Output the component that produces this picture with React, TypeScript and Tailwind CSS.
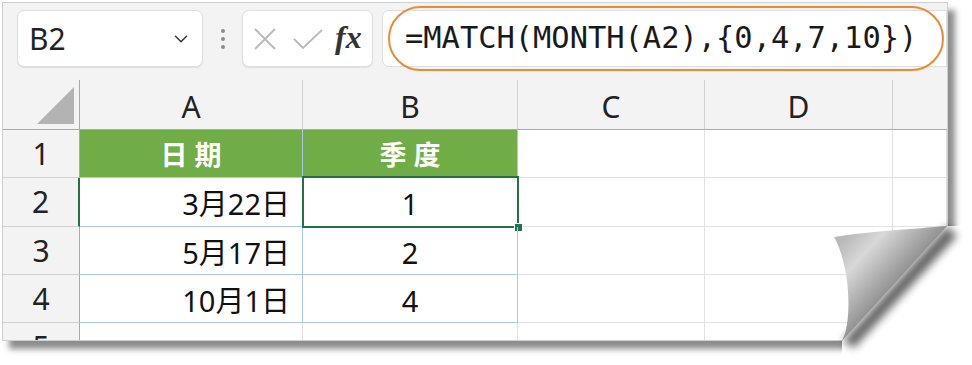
import { ChevronDown } from "lucide-react";

const cols = "grid grid-cols-[77px_223px_215px_187px_188px_1fr]";
const sans = "font-['Noto_Sans','Noto_Sans_CJK_SC',sans-serif]";

const Formula = () => (
  <div className="h-[77px] bg-[#f3f3f3] flex items-start pt-[7px] pl-[14px]">
    <div className="w-[186px] h-[57px] bg-white border border-[#dedede] rounded-[7px] shadow-[0_1px_1px_rgba(0,0,0,0.08)] flex items-center justify-between pl-[11px] pr-[10px]">
      <span className={`${sans} text-[30px] leading-none text-[#222]`}>B2</span>
      <ChevronDown className="w-[22px] h-[22px] text-[#333]" strokeWidth={1.6} />
    </div>
    <div className="w-[39px] h-[57px] flex flex-col items-center justify-center gap-[4px]">
      <span className="w-[4px] h-[4px] rounded-full bg-[#8c8c8c]" />
      <span className="w-[4px] h-[4px] rounded-full bg-[#8c8c8c]" />
      <span className="w-[4px] h-[4px] rounded-full bg-[#8c8c8c]" />
    </div>
    <div className="w-[131px] h-[57px] bg-white border border-[#dedede] rounded-[7px] shadow-[0_1px_1px_rgba(0,0,0,0.08)] flex items-center pl-[10px]">
      <svg width="24" height="24" viewBox="0 0 24 24" className="mr-[15px]">
        <path d="M2 2 L22 22 M22 2 L2 22" stroke="#b9b9b9" strokeWidth="1.8" fill="none" />
      </svg>
      <svg width="32" height="24" viewBox="0 0 32 24" className="mr-[11px]">
        <path d="M2 12 L11 21 L30 3" stroke="#b9b9b9" strokeWidth="1.8" fill="none" />
      </svg>
      <span className="font-['Liberation_Serif',serif] italic font-bold text-[32px] leading-none text-[#333] -mt-[4px]">fx</span>
    </div>
    <div className="ml-[9px] flex-1 h-[57px] bg-white border border-[#dedede] rounded-l-[7px] flex items-center pl-[22px]">
      <span className="font-['DejaVu_Sans_Mono',monospace] text-[30.4px] leading-none text-[#1a1a1a]">
        =MATCH(MONTH(A2),{"{"}0,4,7,10{"}"})
      </span>
    </div>
  </div>
);

const Head = ({ children, last, sel }: { children?: React.ReactNode; last?: boolean; sel?: boolean }) => (
  <div className={`h-[50px] bg-[#f3f3f3] border-b ${sel ? "border-b-[#a9a9a9]" : "border-[#a9a9a9]"} ${last ? "" : "border-r border-r-[#d0d0d0]"} flex items-center justify-center ${sans} text-[30px] text-[#222] leading-none pt-[4px]`}>
    {children}
  </div>
);

const RowNum = ({ n, h, sel }: { n: number; h: string; sel?: boolean }) => (
  <div className={`${h} bg-[#f3f3f3] border-b border-[#d0d0d0] border-r ${sel ? "border-r-2 border-r-[#217346]" : "border-r-[#a9a9a9]"} flex items-start justify-center pt-[9px] ${sans} text-[30px] text-[#222] leading-none`}>
    {n}
  </div>
);

const Cell = ({ children, h, blue, right }: { children?: React.ReactNode; h: string; blue?: boolean; right?: boolean }) => (
  <div className={`${h} border-r border-b ${blue ? "border-[#a9c9ea]" : "border-[#e1e1e1]"} flex items-center ${right ? "justify-end pr-[12px]" : "justify-center"} ${sans} text-[29px] leading-none text-[#111] pt-[3px]`}>
    {children}
  </div>
);

const Green = ({ children }: { children: React.ReactNode }) => (
  <div className="h-[48px] bg-[#70ad47] border-r border-b border-[#a9c9ea] flex items-center justify-center font-['Noto_Sans_CJK_SC',sans-serif] font-bold text-[27px] tracking-[7px] pl-[7px] text-white leading-none">
    {children}
  </div>
);

const dates = ["3月22日", "5月17日", "10月1日"];
const quarters = ["1", "2", "4"];

export default function App() {
  return (
    <div className="relative w-[972px] h-[365px] bg-white overflow-hidden">
      <div className="ml-[2px] mt-[2px] w-[946px] h-[339px] relative overflow-hidden border border-[#cfcfcf] bg-white shadow-[7px_8px_6px_rgba(0,0,0,0.45)]">
        <Formula />
        <div className="absolute left-[385px] top-[3px] w-[556px] h-[65px] rounded-full border-[2.5px] border-[#ec8a35]" />
        <div className={cols}>
          <div className="h-[50px] bg-[#f3f3f3] border-b border-r border-[#a9a9a9] flex items-end justify-end pr-[4px] pb-[5px]">
            <svg width="38" height="37" viewBox="0 0 38 37">
              <path d="M0 37 L37 37 L37 0 Z" fill="#b3b3b3" />
            </svg>
          </div>
          <Head>A</Head>
          <Head>B</Head>
          <Head>C</Head>
          <Head>D</Head>
          <Head last />
        </div>
        <div className={cols}>
          <RowNum n={1} h="h-[48px]" />
          <Green>日期</Green>
          <Green>季度</Green>
          <Cell h="h-[48px]" />
          <Cell h="h-[48px]" />
          <Cell h="h-[48px]" />
        </div>
        {dates.map((d, i) => (
          <div key={d} className={cols}>
            <RowNum n={i + 2} h={i === 0 ? "h-[49px]" : "h-[48px]"} sel={i === 0} />
            <Cell h={i === 0 ? "h-[49px]" : "h-[48px]"} blue right>
              {d}
            </Cell>
            <div className="relative">
              <Cell h={i === 0 ? "h-[49px]" : "h-[48px]"} blue>
                {quarters[i]}
              </Cell>
              {i === 0 && (
                <>
                  <div className="absolute -left-px -top-[2px] -right-px -bottom-px border-2 border-[#217346]" />
                  <div className="absolute -right-[5px] -bottom-[5px] w-[9px] h-[9px] bg-[#217346] border border-white" />
                </>
              )}
            </div>
            <Cell h={i === 0 ? "h-[49px]" : "h-[48px]"} />
            <Cell h={i === 0 ? "h-[49px]" : "h-[48px]"} />
            <Cell h={i === 0 ? "h-[49px]" : "h-[48px]"} />
          </div>
        ))}
        <div className={cols}>
          <RowNum n={5} h="h-[48px]" />
          <Cell h="h-[48px]" />
          <Cell h="h-[48px]" />
          <Cell h="h-[48px]" />
          <Cell h="h-[48px]" />
          <Cell h="h-[48px]" />
        </div>
      </div>
      <svg className="absolute left-0 top-0 pointer-events-none" width="972" height="365" viewBox="0 0 972 365">
        <defs>
          <linearGradient id="curl" gradientUnits="userSpaceOnUse" x1="838" y1="245" x2="892" y2="294">
            <stop offset="0" stopColor="#b9b9b9" />
            <stop offset="0.35" stopColor="#d8d8d8" />
            <stop offset="1" stopColor="#8a8a8a" />
          </linearGradient>
          <filter id="blur" x="-50%" y="-50%" width="200%" height="200%">
            <feGaussianBlur stdDeviation="4" />
          </filter>
        </defs>
        <polygon points="842,341 947,226 972,226 972,365 842,365" fill="#ffffff" />
        <path d="M947 226 L843 341 L854 348 L957 236 Z" fill="#000" opacity="0.6" filter="url(#blur)" />
        <path
          d="M947 226 C915 229 870 231 834 237 C845 256 850 290 848 315 C847 328 845 335 842 341 Z"
          fill="url(#curl)"
        />
      </svg>
    </div>
  );
}
